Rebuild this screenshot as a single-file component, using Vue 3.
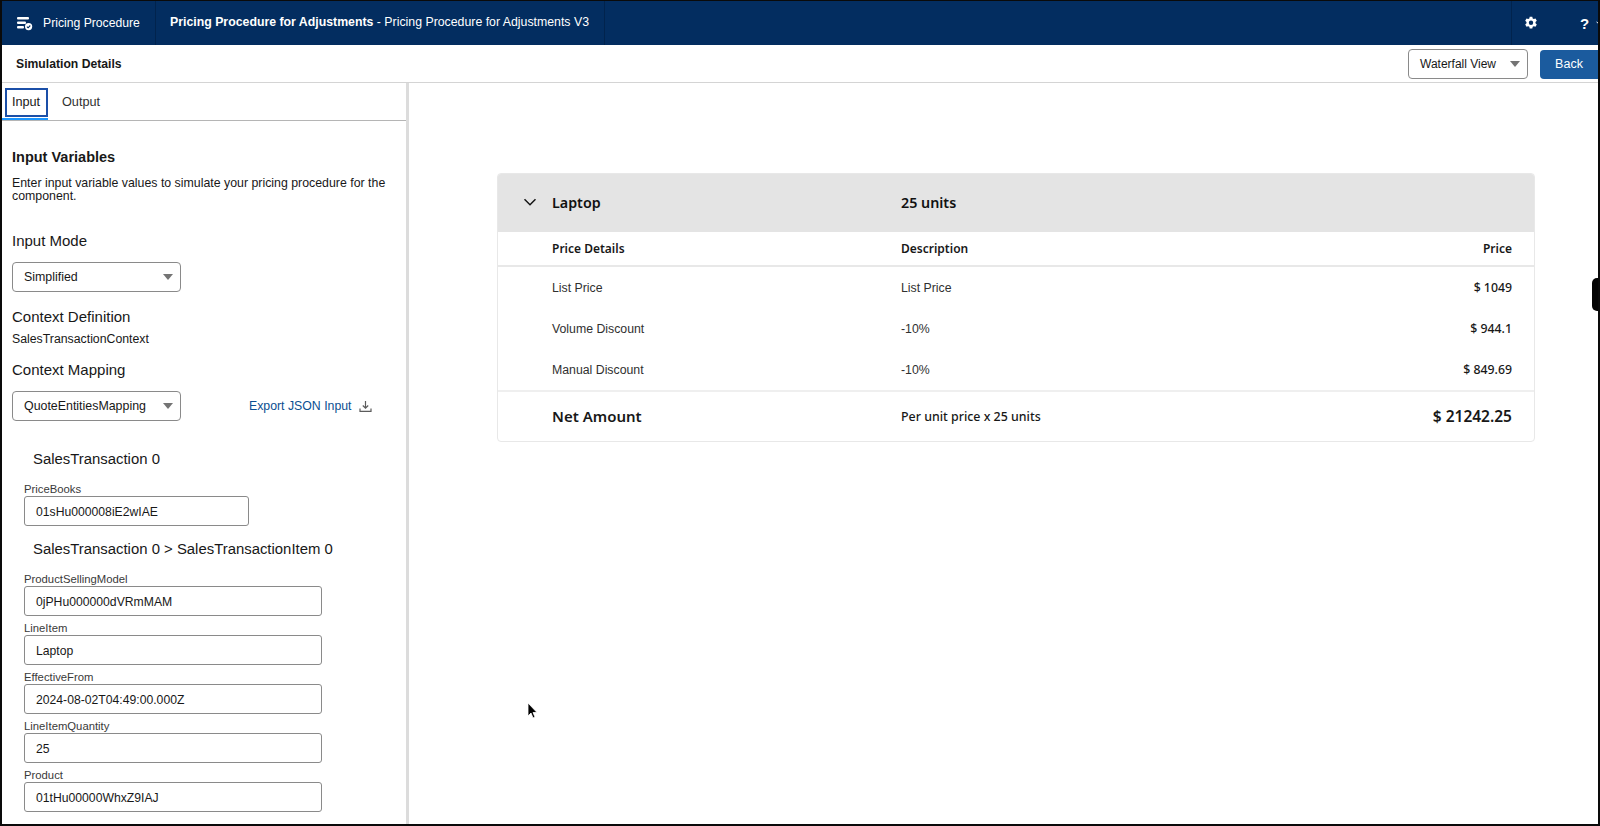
<script setup>
const rootFields = [{ label: 'PriceBooks', value: '01sHu000008iE2wIAE' }]
const itemFields = [
  { label: 'ProductSellingModel', value: '0jPHu000000dVRmMAM' },
  { label: 'LineItem', value: 'Laptop' },
  { label: 'EffectiveFrom', value: '2024-08-02T04:49:00.000Z' },
  { label: 'LineItemQuantity', value: '25' },
  { label: 'Product', value: '01tHu00000WhxZ9IAJ' },
]
const rows = [
  { name: 'List Price', desc: 'List Price', price: '$ 1049' },
  { name: 'Volume Discount', desc: '-10%', price: '$ 944.1' },
  { name: 'Manual Discount', desc: '-10%', price: '$ 849.69' },
]
</script>

<template>
  <div class="frame">
    <header class="topbar">
      <div class="app">
        <svg class="app-icon" width="17" height="16" viewBox="0 0 17 16" aria-hidden="true">
          <rect x="1" y="2" width="12" height="2.4" rx="1" fill="#fff" />
          <rect x="1" y="6.6" width="9" height="2.4" rx="1" fill="#fff" />
          <rect x="1" y="11" width="7" height="2.4" rx="1" fill="#fff" />
          <circle cx="12.6" cy="11.6" r="3.6" fill="#fff" />
          <path d="M10.9 11.6l1.2 1.2 2.2-2.3" fill="none" stroke="#032d60" stroke-width="1.1" />
        </svg>
        <span>Pricing Procedure</span>
      </div>
      <div class="title"><b>Pricing Procedure for Adjustments</b> - Pricing Procedure for Adjustments V3</div>
      <div class="spacer"></div>
      <div class="top-actions">
        <svg class="gear" width="14" height="14" viewBox="0 0 14 14" aria-hidden="true">
          <path fill="#fff" fill-rule="evenodd" d="M5.7.8h2.6l.4 1.7 1.1.6 1.700-.5 1.300 2.200-1.300 1.200v1.300l1.300 1.200-1.300 2.200-1.700-.5-1.100.6-.4 1.700H5.700l-.4-1.700-1.100-.6-1.700.5L1.200 8.500l1.300-1.200V6L1.200 4.800l1.300-2.200 1.700.5 1.100-.6zM7 4.600a2.200 2.200 0 1 0 0 4.400 2.200 2.200 0 0 0 0-4.400z" />
        </svg>
        <span class="help">?</span>
        <svg class="help-chev" width="6" height="4" viewBox="0 0 6 4" aria-hidden="true">
          <path d="M.5.700L3 3.200 5.500.7" fill="none" stroke="#fff" stroke-width="1" />
        </svg>
      </div>
    </header>

    <div class="subbar">
      <h1>Simulation Details</h1>
      <div class="select view-select"><span>Waterfall View</span><i class="caret"></i></div>
      <button class="back">Back</button>
    </div>

    <div class="body">
      <aside class="panel">
        <nav class="tabs">
          <span class="tab active">Input</span>
          <span class="tab">Output</span>
        </nav>
        <div class="panel-body">
          <h2>Input Variables</h2>
          <p class="desc">Enter input variable values to simulate your pricing procedure for the component.</p>
          <h3 class="mode-title">Input Mode</h3>
          <div class="select mode-select"><span>Simplified</span><i class="caret"></i></div>
          <h3 class="def-title">Context Definition</h3>
          <p class="def-value">SalesTransactionContext</p>
          <h3 class="map-title">Context Mapping</h3>
          <div class="map-row">
            <div class="select mode-select"><span>QuoteEntitiesMapping</span><i class="caret"></i></div>
            <a class="export">Export JSON Input
              <svg width="13" height="13" viewBox="0 0 13 13" aria-hidden="true">
                <path d="M6.500 1v7M3.800 5.500l2.700 2.700 2.700-2.700M1 8.500v2.800h11V8.500" fill="none" stroke="#5c5c5c" stroke-width="1.200" />
              </svg>
            </a>
          </div>
          <h4 class="group first">SalesTransaction 0</h4>
          <div v-for="f in rootFields" :key="f.label" class="field short">
            <label>{{ f.label }}</label>
            <div class="input">{{ f.value }}</div>
          </div>
          <h4 class="group second">SalesTransaction 0 &gt; SalesTransactionItem 0</h4>
          <div v-for="f in itemFields" :key="f.label" class="field">
            <label>{{ f.label }}</label>
            <div class="input">{{ f.value }}</div>
          </div>
        </div>
      </aside>

      <main class="main">
        <section class="card">
          <div class="card-head grid">
            <span class="name-cell">
              <svg class="chev" width="14" height="14" viewBox="0 0 14 14" aria-hidden="true">
                <path d="M1.500 4.200L7 9.800l5.500-5.600" fill="none" stroke="#181818" stroke-width="1.500" />
              </svg>
              Laptop
            </span>
            <span>25 units</span>
          </div>
          <div class="col-head grid">
            <span>Price Details</span><span>Description</span><span class="right">Price</span>
          </div>
          <div class="rows">
            <div v-for="r in rows" :key="r.name" class="row grid">
              <span>{{ r.name }}</span><span>{{ r.desc }}</span><span class="right price">{{ r.price }}</span>
            </div>
          </div>
          <div class="total grid">
            <span class="total-name">Net Amount</span>
            <span class="total-desc">Per unit price x 25 units</span>
            <span class="right total-price">$ 21242.25</span>
          </div>
        </section>
      </main>
    </div>

    <div class="edge-tab"></div>
    <svg class="cursor" width="12" height="18" viewBox="0 0 12 18" aria-hidden="true">
      <path d="M1 1v13l3-3 2 5 2-1-2-4.500h4z" fill="#000" stroke="#fff" stroke-width=".8" />
    </svg>
  </div>
</template>

<style scoped>
.frame {
  position: relative;
  width: 1600px;
  height: 826px;
  box-sizing: border-box;
  border: 2px solid #0a0a0a;
  border-top-width: 1px;
  overflow: hidden;
  background: #fff;
  color: #181818;
  font-family: "Liberation Sans", Arial, sans-serif;
  display: flex;
  flex-direction: column;
}
.topbar {
  height: 44px;
  flex: none;
  background: #032d60;
  color: #fff;
  display: flex;
  align-items: stretch;
  font-size: 12.2px;
}
.app {
  width: 154px;
  box-sizing: border-box;
  padding-left: 14px;
  display: flex;
  align-items: center;
  gap: 10px;
  border-right: 1px solid #01234d;
}
.title {
  width: 449px;
  box-sizing: border-box;
  padding-left: 14px;
  line-height: 42px;
  font-size: 12.320px;
  white-space: nowrap;
  border-right: 1px solid #01234d;
}
.spacer { flex: 1; }
.top-actions {
  width: 87px;
  box-sizing: border-box;
  border-left: 1px solid #01234d;
  display: flex;
  align-items: center;
  padding-left: 12px;
}
.gear { flex: none; }
.help { flex: none; font-size: 15px; font-weight: 700; margin-left: 42px; }
.help-chev { margin-left: 7px; flex: none; }
.subbar {
  height: 38px;
  flex: none;
  box-sizing: border-box;
  border-bottom: 1px solid #d4d4d4;
  display: flex;
  align-items: center;
  padding-left: 14px;
}
.subbar h1 {
  flex: 1;
  margin: 0;
  font-size: 12.2px;
  font-weight: 700;
}
.select {
  box-sizing: border-box;
  height: 30px;
  border: 1px solid #8a8a8a;
  border-radius: 4px;
  padding: 0 7px 0 11px;
  display: flex;
  align-items: center;
  justify-content: space-between;
  font-size: 12px;
  background: #fff;
}
.caret {
  width: 0;
  height: 0;
  border-left: 5.500px solid transparent;
  border-right: 5.500px solid transparent;
  border-top: 6.500px solid #747474;
}
.view-select { width: 120px; margin-right: 12px; }
.back {
  width: 58px;
  height: 29px;
  border: 0;
  border-radius: 4px 0 0 4px;
  background: #1b5b9e;
  color: #fff;
  font: 12.500px "Liberation Sans", Arial, sans-serif;
  margin-top: 1px;
}
.body { flex: 1; display: flex; min-height: 0; }
.panel {
  width: 407px;
  flex: none;
  box-sizing: border-box;
  border-right: 3px solid #dcdcdc;
  display: flex;
  flex-direction: column;
}
.tabs {
  height: 38px;
  flex: none;
  box-sizing: border-box;
  border-bottom: 1px solid #b5b5b5;
  display: flex;
  align-items: flex-start;
  font-size: 12.7px;
  color: #303030;
}
.tab { height: 37px; line-height: 38px; padding: 0 14px; }
.tab.active {
  position: relative;
  width: 46px;
  box-sizing: border-box;
  text-align: center;
  padding: 0 0 0 2px;
  border-bottom: 2px solid #1b96ff;
  color: #181818;
}
.tab.active::after {
  content: "";
  position: absolute;
  left: 3px;
  right: 0;
  top: 5px;
  height: 29px;
  box-sizing: border-box;
  border: 2px solid #1b4fa8;
}
.panel-body { padding: 0 10px; flex: 1; overflow: hidden; }
h2 {
  margin: 27px 0 0;
  font-size: 14.500px;
  line-height: 18px;
  font-weight: 700;
}
.desc {
  margin: 11px 0 0;
  font-size: 12.350px;
  line-height: 13px;
  width: 385px;
}
h3 { margin: 0; font-size: 15px; line-height: 18px; font-weight: 400; }
.mode-title { margin-top: 29px; }
.mode-select { width: 169px; margin-top: 12px; font-size: 12.400px; }
.def-title { margin-top: 16px; }
.def-value { margin: 6px 0 0; font-size: 12.300px; line-height: 15px; }
.map-title { margin-top: 14px; }
.map-row { display: flex; align-items: flex-end; }
.export {
  margin-left: 68px;
  height: 30px;
  display: flex;
  align-items: center;
  gap: 7px;
  font-size: 12.300px;
  color: #0b4f91;
}
.group { margin: 0 0 0 21px; font-size: 14.900px; font-weight: 400; line-height: 18px; }
.group.first { margin-top: 29px; }
.group.second { margin-top: 14px; }
.field { width: 298px; margin-left: 12px; }
.field.short { width: 225px; margin-top: 15px; }
.group + .field { margin-top: 15px; }
label {
  display: block;
  font-size: 11.300px;
  line-height: 13px;
  color: #3a3a3a;
}
.input {
  box-sizing: border-box;
  height: 30px;
  margin-bottom: 6px;
  border: 1px solid #8a8a8a;
  border-radius: 3px;
  padding-left: 11px;
  line-height: 30px;
  font-size: 12.200px;
}
.main { flex: 1; padding: 90px 63px 0 88px; }
.card {
  height: 269px;
  box-sizing: border-box;
  border: 1px solid #e8e8e8;
  border-radius: 4px;
  overflow: hidden;
  font-family: "Noto Sans", "Open Sans", sans-serif;
}
.grid {
  display: grid;
  grid-template-columns: 349px 1fr auto;
  padding: 0 22px 0 54px;
  align-items: center;
}
.card-head {
  height: 58px;
  box-sizing: border-box;
  padding-bottom: 2px;
  background: #e4e4e4;
  font-size: 14.300px;
  font-weight: 600;
  color: #111;
}
.name-cell { position: relative; }
.chev { position: absolute; left: -29px; top: 2px; }
.col-head {
  box-sizing: border-box;
  height: 35px;
  border-bottom: 2px solid #e8e8e8;
  font-size: 12px;
  font-weight: 600;
}
.rows { padding-top: 0; }
.row {
  height: 41px;
  font-family: "Liberation Sans", Arial, sans-serif;
  font-size: 12.300px;
  color: #303030;
}
.right { text-align: right; }
.price { font-family: "Noto Sans", sans-serif; font-size: 12.300px; font-weight: 500; color: #181818; }
.total {
  box-sizing: border-box;
  height: 49px;
  border-top: 2px solid #efefef;
}
.total-name { font-size: 15px; font-weight: 600; }
.total-desc { font-size: 12.400px; font-weight: 500; padding-top: 2px; }
.total-price { font-size: 15.500px; font-weight: 600; }
.edge-tab {
  position: absolute;
  right: 0;
  top: 277px;
  width: 6px;
  height: 33px;
  background: #050505;
  border-radius: 5px 0 0 5px;
}
.cursor { position: absolute; left: 525px; top: 701px; }
</style>
